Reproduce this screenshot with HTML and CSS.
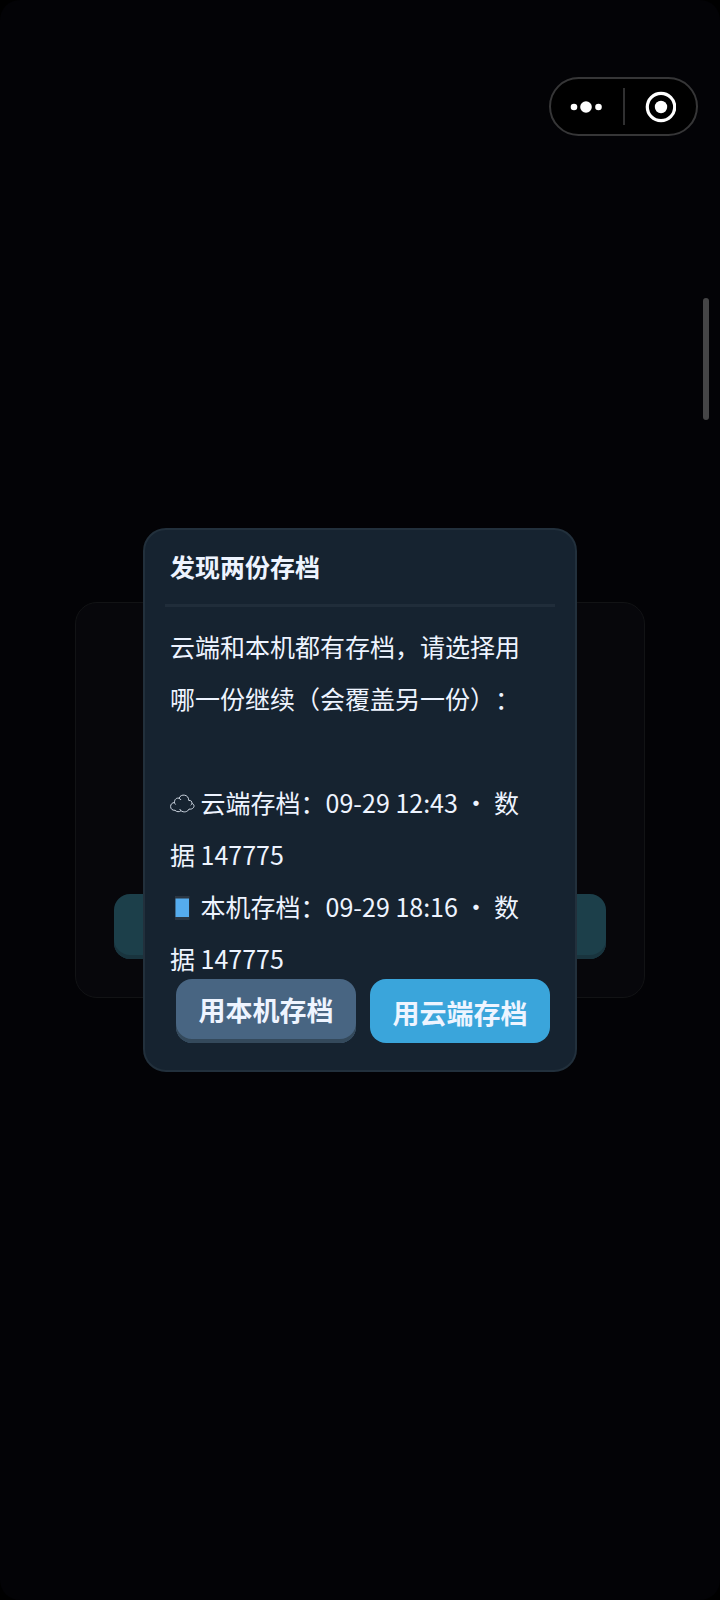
FILE: index.html
```html
<!DOCTYPE html>
<html lang="zh-CN">
<head>
  <meta charset="UTF-8">
  <meta name="viewport" content="width=device-width, initial-scale=1.0">
  <title>发现两份存档</title>
  <link rel="stylesheet" href="styles.css">
</head>
<body>
  <div class="screen">
    <div class="capsule">
      <button class="capsule-btn" type="button" aria-label="更多">
        <svg width="34" height="12" viewBox="0 0 34 12" fill="#fff">
          <circle cx="4" cy="6" r="3.300"/>
          <circle cx="16" cy="6" r="5.800"/>
          <circle cx="28.500" cy="6" r="3.300"/>
        </svg>
      </button>
      <span class="capsule-line"></span>
      <button class="capsule-btn" type="button" aria-label="关闭">
        <svg width="32" height="32" viewBox="0 0 32 32">
          <circle cx="17" cy="16" r="13.700" fill="none" stroke="#fff" stroke-width="3.200"/>
          <circle cx="17" cy="16" r="6.200" fill="#fff"/>
        </svg>
      </button>
    </div>
    <div class="scroll-thumb"></div>

    <div class="card">
      <button class="card-btn" type="button" aria-label="继续"></button>
    </div>

    <div class="modal" role="dialog" aria-labelledby="modal-title">
      <h2 class="modal-title" id="modal-title">发现两份存档</h2>
      <div class="modal-body">
        <p>云端和本机都有存档，请选择用哪一份继续（会覆盖另一份）：</p>
        <p class="save cloud">
          <svg class="icon" viewBox="0 0 25 25" fill="none" stroke="#dfe7f2" stroke-width="0.900">
            <path d="M4.500 10.500C4.300 7 7 5.500 9 6.300C10 3.500 12.500 2.800 14.500 3.200C17 3.500 18.600 5.300 18.800 8.500C21 8.200 22.200 9.500 21.900 11.500C24.400 12 24.800 15 22.500 16.500C21.300 17.300 20 17.200 19 17C18 20 13.500 20.800 11 18.700C9.500 20.200 6.500 20 5 18.300C2.500 18.500.6 17 .6 14.500C.6 12.200 2.200 10.600 4.500 10.500ZM4.500 10.500C4.700 11.500 5 12 5.600 12.500M9 6.300C10 6.700 10.700 7.300 11 8M21.900 11.500C21.700 12.300 21.300 12.800 20.700 13.200M11 18.700C10.200 18.200 9.900 17.600 9.700 17"/>
          </svg>
          云端存档：09-29 12:43 ・ 数据 147775
        </p>
        <p class="save">
          <svg class="icon" viewBox="0 0 25 25">
            <rect x="5" y="0" width="14.500" height="24" fill="#2b3642"/>
            <rect x="5.500" y="2.500" width="13.500" height="18.500" fill="#55acee"/>
          </svg>
          本机存档：09-29 18:16 ・ 数据 147775
        </p>
      </div>
      <div class="modal-actions">
        <button class="btn btn-local" type="button">用本机存档</button>
        <button class="btn btn-cloud" type="button">用云端存档</button>
      </div>
    </div>
  </div>
</body>
</html>
```
FILE: styles.css
```css
* {
  box-sizing: border-box;
}
body {
  margin: 0;
  background: #000;
  font-family: "Noto Sans CJK SC", "Noto Sans", sans-serif;
  color: #eef4ff;
  text-spacing-trim: space-all;
}
button {
  border: 0;
  padding: 0;
  font: inherit;
  color: inherit;
}
.screen {
  position: relative;
  display: grid;
  place-items: center;
  min-height: 100vh;
  border-radius: 20px;
  background: #030306;
}

/* system capsule, top right */
.capsule {
  position: absolute;
  top: 77px;
  right: 22px;
  display: flex;
  align-items: center;
  width: 149px;
  height: 59px;
  border: 2px solid #363637;
  border-radius: 30px;
  background: #000;
}
.capsule-btn {
  flex: 1;
  display: flex;
  align-items: center;
  justify-content: center;
  height: 100%;
  background: none;
}
.capsule-line {
  width: 2px;
  height: 37px;
  background: #303031;
}
.scroll-thumb {
  position: absolute;
  top: 298px;
  right: 11px;
  width: 6px;
  height: 122px;
  border-radius: 3px;
  background: #454546;
}

/* start card behind the dialog */
.card,
.modal {
  grid-area: 1 / 1;
}
.card {
  display: flex;
  align-items: flex-end;
  width: calc(100% - 150px);
  height: 396px;
  padding: 38px;
  border: 1px solid #121315;
  border-radius: 22px;
  background: #07070b;
}
.card-btn {
  width: 100%;
  height: 65px;
  border-radius: 16px;
  box-shadow: inset 0 -4px #19343e;
  background: #1c3f4a;
}

.modal {
  width: 434px;
  padding: 0 20px 27px;
  border: 2px solid #22303c;
  border-radius: 23px;
  background: #162330;
}
.modal-title {
  margin: 0;
  padding: 17px 5px 19px;
  border-bottom: 3px solid #202d3a;
  font-size: 25px;
  line-height: 38px;
  font-weight: 700;
}
.modal-body {
  padding: 13px 16px 0 5px;
  font-size: 25px;
  line-height: 52px;
}
.modal-body p {
  margin: 0;
}
.modal-body .cloud {
  margin-top: 52px;
}
.icon {
  width: 25px;
  height: 25px;
  vertical-align: -4px;
}
.modal-actions {
  display: flex;
  justify-content: flex-end;
  gap: 14px;
  margin-top: -5px;
  padding-right: 5px;
}
.btn {
  width: 180px;
  height: 64px;
  border-radius: 16px;
  font-size: 27px;
  line-height: 60px;
  font-weight: 700;
}
.btn-local {
  padding-bottom: 2px;
  box-shadow: inset 0 -4px #34495b;
  background: #486582;
}
.btn-cloud {
  padding-top: 4px;
  background: #3aa5db;
}
```
